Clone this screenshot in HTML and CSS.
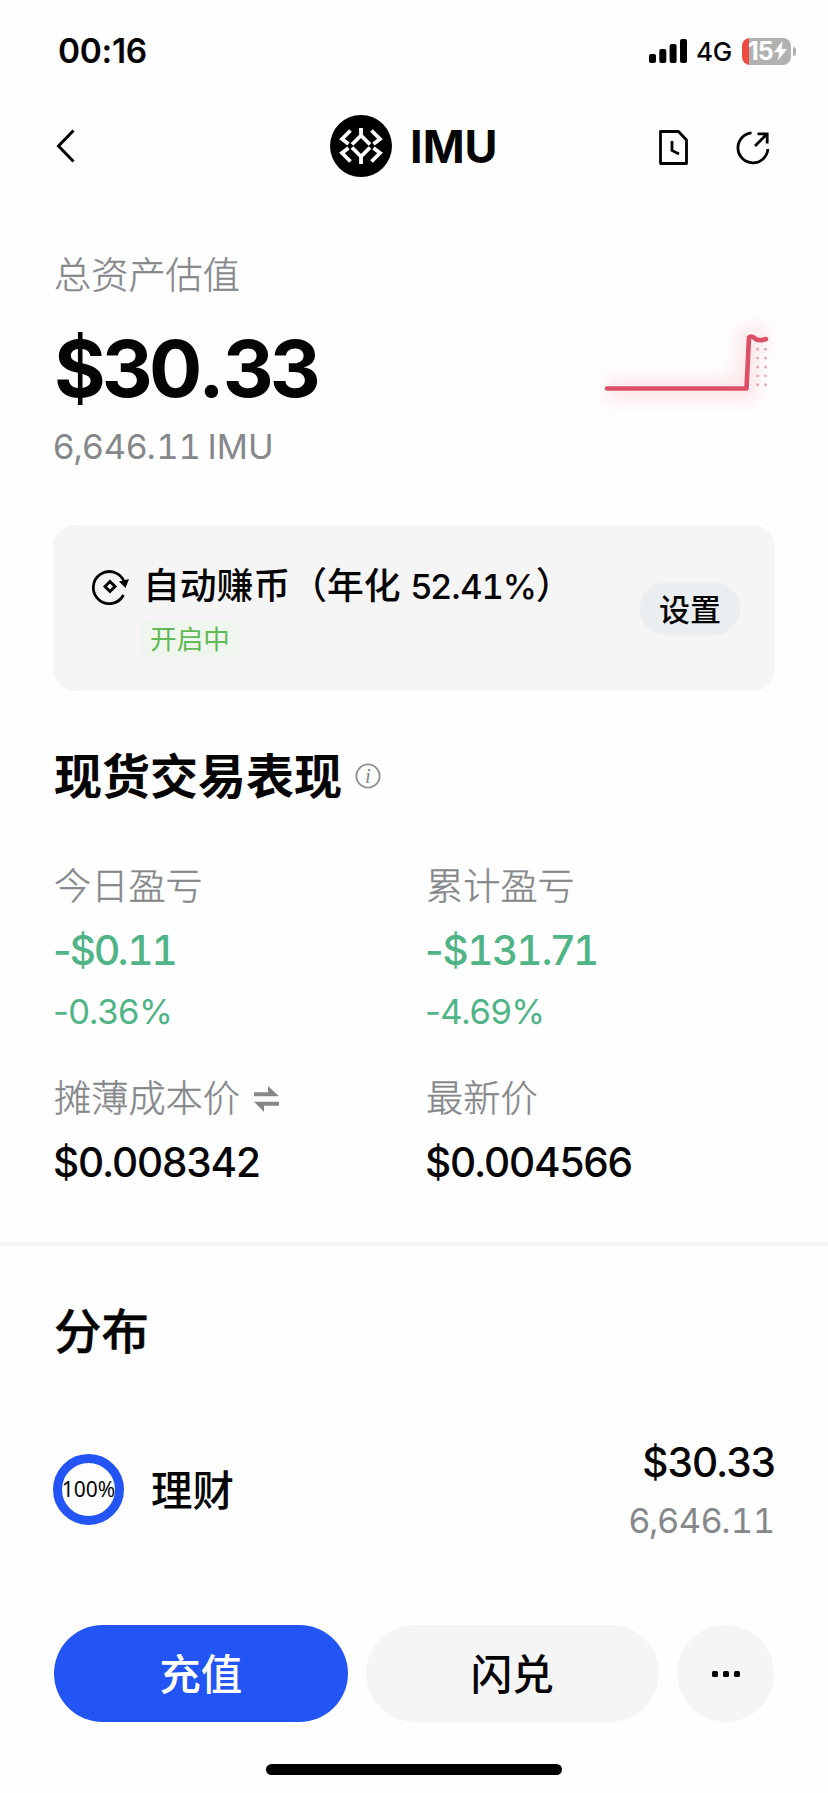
FILE: index.html
```
<!DOCTYPE html>
<html lang="zh-CN">
<head>
<meta charset="utf-8">
<title>IMU</title>
<link rel="stylesheet" href="styles.css">
</head>
<body>
<div class="status">
  <span class="time">00:16</span>
  <svg class="signal" width="38" height="24" viewBox="0 0 38 24"><rect x="0" y="15" width="7" height="9" rx="2"/><rect x="10.3" y="10" width="7" height="14" rx="2"/><rect x="20.6" y="5" width="7" height="19" rx="2"/><rect x="31" y="0" width="7" height="24" rx="2"/></svg>
  <span class="net">4G</span>
  <div class="battery"><span class="charge">15</span><svg class="bolt" width="13" height="20" viewBox="0 0 13 20"><path d="M8.5 0 0 11.2h5.2L3.8 19.5 13 8H7.6z" fill="#fff"/></svg></div>
  <i class="nub"></i>
</div>
<header class="nav">
  <svg class="back" width="20" height="36" viewBox="0 0 20 36"><path d="M18.500 2.500 3.500 18l15 15.500" fill="none" stroke="#000" stroke-width="3"/></svg>
  <div class="coin">
    <svg width="62" height="62" viewBox="0 0 62 62"><circle cx="31" cy="31" r="31"/><g fill="none" stroke="#fff" stroke-width="3.800"><path d="M31 13v8.500M22 29.500l9-9 9 9M20.500 15.500l-8.500 8.500 6.500 5M41.500 15.500l8.500 8.500-6.500 5"/><path d="M31 49v-8.500M22 32.500l9 9 9-9M20.500 46.500l-8.500-8.500 6.500-5M41.500 46.500l8.500-8.500-6.500-5"/></g></svg>
    <h1>IMU</h1>
  </div>
  <svg class="doc" width="29" height="35" viewBox="0 0 29 35"><g fill="none" stroke="#000" stroke-width="2.800"><path d="M1.500 1.500h18l8 8.500v23.500h-26z" stroke-linejoin="round"/><path d="M13 11v9.500l7 3.500"/></g></svg>
  <svg class="share" width="34" height="34" viewBox="0 0 34 34"><g fill="none" stroke="#000" stroke-width="2.800"><path d="M15.500 1.900A15 15 0 1 0 31.900 18"/><path d="M19 15 31 3M21.500 2.800h9.700v9.700"/></g></svg>
</header>
<main>
  <section class="total">
    <div>
      <p class="label">总资产估值</p>
      <p class="amount">$30<span>.</span>33</p>
      <p class="sub">6,646.<b>11</b> IMU</p>
    </div>
    <svg class="spark" width="220" height="130" viewBox="0 0 220 130"><defs><filter id="glow" x="-20%" y="-60%" width="140%" height="220%"><feGaussianBlur stdDeviation="9"/></filter></defs><path d="M27 90h139l3-52 16-4" fill="none" stroke="#f58b9b" stroke-opacity=".22" stroke-width="22" filter="url(#glow)"/><path d="M177.500 48v38M185.500 48v38" stroke="#e5a5ae" stroke-width="2.400" stroke-dasharray="2.400 6.500"/><path d="M27 88.500h139.500L169 37.500q3-2 6 1t11 .5" fill="none" stroke="#dc5065" stroke-width="4.600" stroke-linecap="round" stroke-linejoin="round"/></svg>
  </section>
  <section class="earn">
    <svg class="cycle" width="38" height="36" viewBox="0 0 38 36"><g fill="none" stroke="#050505" stroke-width="2.800"><path d="M31.500 26A16 16 0 1 1 32.500 13.500"/><path d="m18 12.500 5 5-5 5-5-5z" stroke-width="2.900"/></g><path d="m27 12.500 10-2.500-3.500 9z"/></svg>
    <div class="earn-text">
      <p class="earn-title">自动赚币（年化 <span>52.4<b>1</b>%</span><em>）</em></p>
      <span class="badge">开启中</span>
    </div>
    <button class="set">设置</button>
  </section>
  <h2>现货交易表现<svg width="26" height="26" viewBox="0 0 26 26"><circle cx="13" cy="13" r="11.600" fill="none" stroke="#929292" stroke-width="1.900"/><text class="info" x="13" y="20" text-anchor="middle">i</text></svg></h2>
  <section class="stats">
    <div class="cell">
      <p class="label">今日盈亏</p>
      <p class="value green tight">-$0.<b>11</b></p>
      <p class="pct green">-0.36%</p>
    </div>
    <div class="cell">
      <p class="label">累计盈亏</p>
      <p class="value green">-$<b>1</b>3<b>1</b>.7<b>1</b></p>
      <p class="pct green">-4.69%</p>
    </div>
    <div class="cell">
      <p class="label">摊薄成本价<svg class="swap" width="25" height="26" viewBox="0 0 25 26"><path d="M0 6.300h14V0l11 10.200H0zM25 19.700H10V26L0 15.700h25z" fill="#85878a"/></svg></p>
      <p class="value">$0.008342</p>
    </div>
    <div class="cell">
      <p class="label">最新价</p>
      <p class="value">$0.004566</p>
    </div>
  </section>
</main>
<hr>
<section class="dist">
  <h2>分布</h2>
  <div class="holding">
    <div class="ring">100%</div>
    <span class="kind">理财</span>
    <div class="sum">
      <p class="value">$30.33</p>
      <p class="sub">6,646.<b>11</b></p>
    </div>
  </div>
</section>
<div class="actions">
  <button class="btn primary">充值</button>
  <button class="btn">闪兑</button>
  <button class="btn more"><i></i><i></i><i></i></button>
</div>
<div class="home"></div>
</body>
</html>
```
FILE: styles.css
```
* { box-sizing: border-box; margin: 0; padding: 0; }
body { width: 828px; height: 1793px; overflow: hidden; background: #fefefe; color: #050505; font-family: Inter, "Noto Sans CJK SC", sans-serif; }
button { border: 0; font-family: inherit; color: inherit; }
svg { display: block; flex: none; }
/* figures whose "1" carries a foot serif */
b { font-weight: inherit; font-feature-settings: "tnum"; }
.status { display: flex; align-items: center; height: 102px; padding: 0 32px 0 58px; }
.time { font-size: 33.500px; font-weight: 600; line-height: 40px; letter-spacing: -.3px; }
.signal { margin-left: auto; }
.net { width: 36px; margin: 2px 0 0 9px; font-size: 26px; font-weight: 450; line-height: 32px; letter-spacing: -.3px; }
.battery { display: flex; align-items: center; gap: 1px; width: 49px; height: 27px; margin-left: 10px; padding-left: 6px; border-radius: 8px; background: linear-gradient(90deg, #ee4b3e 7px, #b1b1b1 7px); }
.charge { color: #fff; font-size: 25px; font-weight: 700; line-height: 27px; letter-spacing: -1px; }
.nub { width: 3px; height: 9px; margin-left: 2px; border-radius: 0 4px 4px 0; background: #b1b1b1; }
.nav { display: flex; align-items: center; height: 88px; padding: 0 58px 0 55px; }
.coin { display: flex; align-items: center; gap: 18px; margin-left: 255px; }
h1 { width: 100px; padding-top: 2px; font-size: 45px; font-weight: 650; line-height: 60px; letter-spacing: 0; }
.doc { margin-left: 149px; margin-top: 2px; }
.share { margin-left: auto; margin-top: 4px; }
main { padding: 60px 53px 55px; }
.total { display: flex; justify-content: space-between; height: 217px; }
.label { height: 48px; padding: 2px 0 0 1px; font-size: 37.200px; font-weight: 300; line-height: 48px; color: #85878a; -webkit-text-stroke: .35px #85878a; }
.amount { margin-top: 30px; padding-left: 1px; font-size: 79px; font-weight: 650; line-height: 80px; letter-spacing: -3.900px; }
.amount span { letter-spacing: -2px; }
.sub { margin-top: 19px; font-size: 34.500px; line-height: 40px; color: #85878a; word-spacing: -3px; }
.spark { margin: 50px -25px 0 0; }
.earn { display: flex; height: 166px; margin-top: 58px; padding: 37px 35px 0 38px; border-radius: 22px; background: #f5f5f5; }
.cycle { margin: 7px 0 0 1px; }
.earn-text { margin-left: 13px; }
.earn-title { height: 48px; font-size: 36.800px; font-weight: 500; line-height: 48px; white-space: nowrap; }
.earn-title span { font-size: 34.500px; letter-spacing: -1.150px; }
.earn-title em { font-style: normal; }
.badge { display: block; width: 100px; margin: 11px 0 0 -3px; border-radius: 6px; background: #eff6ee; color: #62b957; font-size: 26.600px; line-height: 37px; text-align: center; }
.set { width: 100px; height: 53px; margin: 20px 0 0 auto; padding-top: 2px; border-radius: 27px; background: #ebeef0; font-size: 31px; font-weight: 500; line-height: 51px; }
h2 { display: flex; align-items: center; gap: 13px; height: 60px; margin-top: 55px; padding: 1px 0 0 1px; font-size: 48px; font-weight: 700; line-height: 60px; }
h2 svg { margin-top: -2px; }
.info { font-family: "Liberation Serif", serif; font-size: 21px; font-style: italic; font-weight: 400; fill: #85878a; }
.stats { display: grid; grid-template-columns: 372px 1fr; margin-top: 56px; row-gap: 42px; }
.cell .label { display: flex; align-items: center; gap: 14px; }
.value { margin-top: 17px; font-size: 40.500px; font-weight: 500; line-height: 48px; letter-spacing: -1.150px; }
.value.green { letter-spacing: -1.350px; }
.value.tight { letter-spacing: -2px; }
.pct { margin-top: 17px; font-size: 34.500px; line-height: 40px; letter-spacing: -.500px; }
.green { color: #50b487; }
hr { height: 4px; border: 0; background: #f5f5f5; }
.dist { padding: 0 53px; }
.dist h2 { font-size: 47.500px; font-weight: 500; -webkit-text-stroke: .4px #050505; }
.holding { display: flex; height: 102px; margin-top: 78px; align-items: center; }
.ring { display: flex; align-items: center; justify-content: center; width: 71px; height: 71px; margin-top: -2px; border: 9px solid #2255f4; border-radius: 50%; font-family: "Noto Sans", sans-serif; font-size: 21px; white-space: nowrap; }
.kind { margin-left: 27px; padding-top: 1px; font-size: 41.500px; font-weight: 500; line-height: 60px; }
.sum { margin-left: auto; text-align: right; }
.sum .value { margin: 0; letter-spacing: -1px; }
.sum .sub { margin-top: 14px; letter-spacing: -.2px; }
.actions { display: flex; gap: 18px; margin-top: 84px; padding: 0 54px; }
.btn { flex: 1; height: 97px; padding-top: 3px; border-radius: 49px; background: #f5f5f5; font-size: 41.500px; font-weight: 500; line-height: 94px; }
.primary { background: #2255f4; color: #fff; }
.more { display: flex; flex: 0 0 97px; align-items: center; justify-content: center; gap: 5px; padding: 0; }
.more i { width: 6px; height: 6px; border-radius: 1.500px; background: #050505; }
.home { width: 296px; height: 11px; margin: 42px 0 0 266px; border-radius: 6px; background: #000; }
```
